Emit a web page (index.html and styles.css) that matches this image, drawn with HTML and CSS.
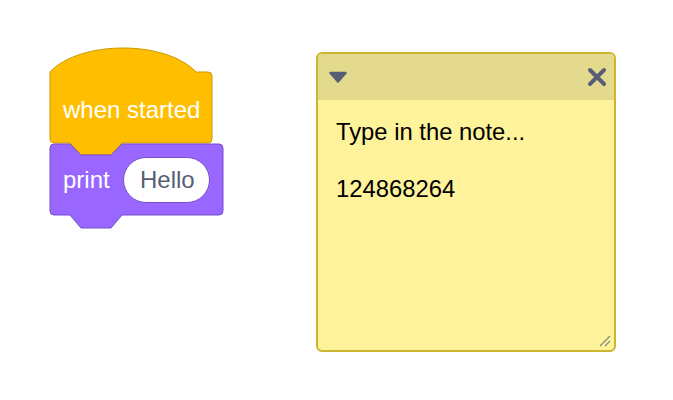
FILE: index.html
```html
<!DOCTYPE html>
<html lang="en">

<head>
    <meta charset="UTF-8">
    <meta name="viewport" content="width=device-width, initial-scale=1.0">
    <title>Blocks workspace</title>
    <link rel="stylesheet" href="styles.css">
</head>

<body>
    <div class="workspace">
        <svg class="blocks" xmlns="http://www.w3.org/2000/svg" viewBox="40 40 190 195" width="190" height="195">
            <path class="block-hat"
                d="M50,72 C80,40 166,40 196,72 L208,72 Q212,72 212,76 L212,139 Q212,143 208,143 L122,143 L111,155 L81,155 L70,143 L54,143 Q50,143 50,139 Z" />
            <text class="block-label" x="63" y="118">when started</text>
            <path class="block-print"
                d="M50,148 Q50,144 54,144 L70,144 L81,155 L111,155 L122,144 L219,144 Q223,144 223,148 L223,211 Q223,215 219,215 L122,215 L111,228 L81,228 L70,215 L54,215 Q50,215 50,211 Z" />
            <text class="block-label" x="63" y="188">print</text>
            <rect class="block-input" x="123.5" y="157.5" width="86" height="45" rx="22.5" />
            <text class="block-input-text" x="140" y="188">Hello</text>
        </svg>

        <div class="note">
            <div class="note-bar">
                <svg class="note-toggle" xmlns="http://www.w3.org/2000/svg" viewBox="0 0 18 12" width="18" height="12">
                    <path d="M1.5,2 L16.5,2 L9,10.5 Z" />
                </svg>
                <svg class="note-close" xmlns="http://www.w3.org/2000/svg" viewBox="0 0 20 20" width="20" height="20">
                    <path d="M3,3 L17,17 M17,3 L3,17" />
                </svg>
            </div>
            <div class="note-body">Type in the note...

124868264</div>
            <svg class="note-grip" xmlns="http://www.w3.org/2000/svg" viewBox="0 0 14 14" width="14" height="14">
                <path d="M2,12 L12,2 M7,12 L12,7" />
            </svg>
        </div>
    </div>
</body>

</html>
```

FILE: styles.css
```css
* {
    box-sizing: border-box;
}

body {
    margin: 0;
    background-color: #ffffff;
    font-family: "Liberation Sans", Arial, sans-serif;
}

.workspace {
    display: flex;
    align-items: flex-start;
    padding: 40px 0 0 40px;
}

.blocks {
    display: block;
    flex: none;
}

.block-hat {
    fill: #ffbf00;
    stroke: #cc9900;
    stroke-width: 1;
}

.block-print {
    fill: #9966ff;
    stroke: #774dcb;
    stroke-width: 1;
}

.block-label {
    fill: #ffffff;
    font-size: 24px;
    font-family: "Liberation Sans", Arial, sans-serif;
}

.block-input {
    fill: #ffffff;
    stroke: #774dcb;
    stroke-width: 1;
}

.block-input-text {
    fill: #575e75;
    font-size: 24px;
    font-family: "Liberation Sans", Arial, sans-serif;
}

.note {
    position: relative;
    flex: none;
    width: 300px;
    height: 300px;
    margin: 12px 0 0 86px;
    display: flex;
    flex-direction: column;
    background-color: #fef29b;
    border: 2px solid #cbb632;
    border-radius: 6px;
    overflow: hidden;
}

.note-bar {
    height: 46px;
    flex: none;
    display: flex;
    align-items: center;
    justify-content: space-between;
    padding: 0 7px 0 11px;
    background-color: #e4da8e;
}

.note-toggle path {
    fill: #575e75;
    stroke: #575e75;
    stroke-width: 2.5;
    stroke-linejoin: round;
}

.note-close path {
    fill: none;
    stroke: #575e75;
    stroke-width: 4;
    stroke-linecap: round;
}

.note-body {
    flex: 1;
    padding: 18px 18px;
    font-size: 23.8px;
    line-height: 28.5px;
    color: #000000;
    white-space: pre-wrap;
}

.note-grip {
    position: absolute;
    right: 2px;
    bottom: 2px;
}

.note-grip path {
    fill: none;
    stroke: #888888;
    stroke-width: 1.2;
}
```
